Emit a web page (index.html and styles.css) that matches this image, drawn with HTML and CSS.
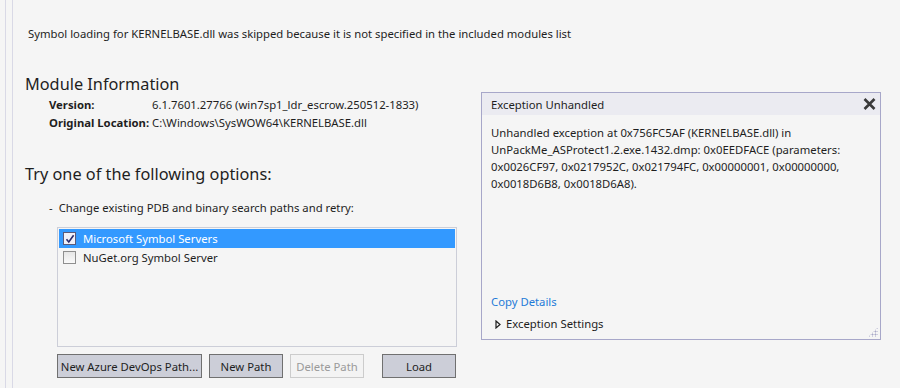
FILE: index.html
```html
<!DOCTYPE html>
<html lang="en">
<head>
  <meta charset="UTF-8" />
  <title>KERNELBASE.dll not loaded</title>
  <link rel="stylesheet" href="styles.css">
</head>
<body>
  <div class="rail"></div>
  <div class="page">
    <p class="skip-msg">Symbol loading for KERNELBASE.dll was skipped because it is not specified in the included modules list</p>

    <div class="columns">
      <div class="left-col">
        <h2 class="section-title">Module Information</h2>
        <div class="info">
          <div class="info-row">
            <span class="info-label">Version:</span>
            <span class="info-value">6.1.7601.27766 (win7sp1_ldr_escrow.250512-1833)</span>
          </div>
          <div class="info-row">
            <span class="info-label">Original Location:</span>
            <span class="info-value">C:\Windows\SysWOW64\KERNELBASE.dll</span>
          </div>
        </div>

        <h2 class="section-title options-title">Try one of the following options:</h2>
        <p class="option-line"><span class="dash">-</span>Change existing PDB and binary search paths and retry:</p>

        <div class="path-list">
          <div class="path-row selected">
            <span class="check checked">
              <svg width="10" height="10" viewBox="0 0 10 10"><path d="M1.5 5.2 L3.8 8 L8.6 1.2" fill="none" stroke="#2a2a6a" stroke-width="1.6"/></svg>
            </span>
            Microsoft Symbol Servers
          </div>
          <div class="path-row">
            <span class="check"></span>
            NuGet.org Symbol Server
          </div>
        </div>

        <div class="button-row">
          <button class="btn btn-azure">New Azure DevOps Path...</button>
          <button class="btn">New Path</button>
          <button class="btn" disabled>Delete Path</button>
          <button class="btn btn-load">Load</button>
        </div>
      </div>

      <div class="exception-panel">
        <div class="panel-header">
          <span>Exception Unhandled</span>
          <svg class="close-x" width="13" height="12" viewBox="0 0 13 12"><path d="M1.5 1 L11.5 11 M11.5 1 L1.5 11" stroke="#3a3a3a" stroke-width="2.6"/></svg>
        </div>
        <div class="panel-body">
          <p class="exception-text">Unhandled exception at 0x756FC5AF (KERNELBASE.dll) in UnPackMe_ASProtect1.2.exe.1432.dmp: 0x0EEDFACE (parameters: 0x0026CF97, 0x0217952C, 0x021794FC, 0x00000001, 0x00000000, 0x0018D6B8, 0x0018D6A8).</p>
          <div class="panel-footer">
            <a class="copy-link" href="#">Copy Details</a>
            <div class="settings-line">
              <svg width="6" height="9" viewBox="0 0 6 9"><path d="M1 1 L5 4.5 L1 8 Z" fill="none" stroke="#1e1e1e" stroke-width="1.2"/></svg>
              Exception Settings
            </div>
          </div>
        </div>
        <div class="grip"></div>
      </div>
    </div>
  </div>
</body>
</html>
```
FILE: styles.css
```css
* { box-sizing: border-box; }

body {
  margin: 0;
  font-family: 'Noto Sans', 'Open Sans', sans-serif;
  font-size: 11.3px;
  color: #1e1e1e;
  background: #f5f5f5;
  display: flex;
  height: 100vh;
  overflow: hidden;
}

.rail {
  margin-left: 5px;
  width: 8px;
  border-left: 1px solid #d9d9e6;
  border-right: 1px solid #d9d9e6;
  flex-shrink: 0;
}

.page {
  flex: 1;
  padding-left: 12px;
}

.skip-msg {
  margin: 26px 0 0 3px;
  line-height: 16px;
}

.columns {
  display: flex;
  align-items: flex-start;
}

.left-col {
  width: 439px;
}

.section-title {
  margin: 30px 0 0;
  font-weight: 400;
  font-size: 16.3px;
  line-height: 24px;
  color: #1e1e1e;
}

.info {
  margin-left: 24px;
  line-height: 18px;
}

.info-row {
  display: flex;
  white-space: nowrap;
}

.info-label {
  font-weight: 700;
  width: 103px;
  flex-shrink: 0;
}

.options-title { margin-top: 30px; }

.option-line {
  margin: 14px 0 0 24px;
  line-height: 16px;
}

.dash { margin-right: 6px; }

.path-list {
  margin: 11px 7px 0 32px;
  height: 120px;
  border: 1px solid #ccced8;
  padding: 1px;
}

.path-row {
  display: flex;
  align-items: center;
  height: 19px;
  padding-left: 4px;
}

.path-row.selected {
  background: #3399ff;
  color: #fff;
}

.check {
  width: 13px;
  height: 13px;
  border: 1px solid #8f8f8f;
  background: linear-gradient(#e6e6e6, #fafafa);
  margin-right: 7px;
  display: flex;
  align-items: center;
  justify-content: center;
}

.check.checked {
  border-color: #5a5a7a;
  background: #f0f0f8;
}

.button-row {
  display: flex;
  margin: 7px 0 0 32px;
  gap: 7px;
}

.btn {
  height: 24px;
  width: 74px;
  font: inherit;
  color: #1e1e1e;
  background: #ccced8;
  border: 1px solid #707070;
  padding: 0;
  white-space: nowrap;
}

.btn-azure { width: 145px; }

.btn:disabled {
  color: #9a9a9a;
  background: #f3f3f3;
  border-color: #cccccc;
}

.btn-load { margin-left: 11px; }

.exception-panel {
  position: relative;
  margin: 50px 0 0 17px;
  width: 400px;
  height: 248px;
  border: 1px solid #a7a7c9;
  display: flex;
  flex-direction: column;
}

.panel-header {
  height: 22px;
  background: #ebebf1;
  display: flex;
  align-items: center;
  justify-content: space-between;
  padding: 0 4px 0 9px;
}

.panel-body {
  flex: 1;
  display: flex;
  flex-direction: column;
  justify-content: space-between;
  padding: 9px 9px 7px;
}

.exception-text {
  margin: 0;
  line-height: 17px;
}

.copy-link {
  color: #1e7bd8;
  text-decoration: none;
  line-height: 18px;
}

.settings-line {
  display: flex;
  align-items: center;
  gap: 5px;
  margin: 5px 0 0 4px;
  line-height: 16px;
}

.grip {
  position: absolute;
  right: 2px;
  bottom: 2px;
  width: 10px;
  height: 10px;
  background-image: radial-gradient(#a8a8c8 0.8px, transparent 1.2px);
  background-size: 3px 3px;
  clip-path: polygon(100% 0, 100% 100%, 0 100%);
}
```
